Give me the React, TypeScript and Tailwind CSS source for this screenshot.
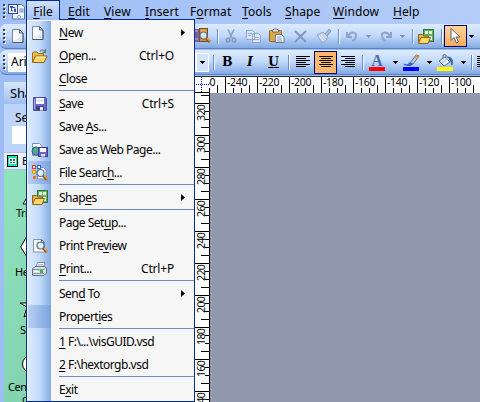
import React from "react";

type IconProps = { className?: string };

const PageIcon = ({ className = "" }: IconProps) => (
  <svg className={className} width="16" height="16" viewBox="2.5 0 16 16">
    <path d="M3 1.500h7l3.500 3.500v9.500H3z" fill="#f7faff" stroke="#7b8aa3" />
    <path d="M13.500 5v9.500H3" fill="none" stroke="#46546c" />
    <path d="M10 1.500V5h3.500z" fill="#c4d0e4" stroke="#55637c" />
    <path d="M12 7v6H6z" fill="#dde5f2" />
  </svg>
);

const OpenIcon = ({ className = "" }: IconProps) => (
  <svg className={className} width="17" height="16" viewBox="0 0 17 16">
    <path d="M9 3.500c1-2 3.500-2 5 0M14.500 1v3.500H11.500" fill="none" stroke="#5b7189" strokeWidth="1.200" />
    <path d="M1.500 14V5l1-1h3.500l1.500 1.500h5V8" fill="#e9bd57" stroke="#9a6d14" />
    <path d="M1.500 14.500L4.500 8h11.500l-3 6.500z" fill="#ffd66b" stroke="#8d6211" />
    <path d="M5 9h9.500" stroke="#fff0b5" />
  </svg>
);

const SaveIcon = ({ className = "" }: IconProps) => (
  <svg className={className} width="16" height="16" viewBox="0 0 16 16">
    <path d="M1.500 1.500h12l1 1v12h-13z" fill="#6968c4" stroke="#4f4ca6" />
    <rect x="4" y="2" width="8" height="6" fill="#f4f6ff" />
    <path d="M5 4.500h6" stroke="#c9cdea" />
    <rect x="4" y="10" width="8" height="4.500" fill="#454284" />
    <rect x="8" y="11" width="3" height="3.500" fill="#e8eaff" />
    <path d="M2.500 3v10" stroke="#aaa9ee" />
  </svg>
);

const SaveWebIcon = () => (
  <svg width="17" height="16" viewBox="0 0 17 16">
    <path d="M1.500 1.500h7L11 4v9.500H1.500z" fill="#f7faff" stroke="#8291a8" />
    <circle cx="5" cy="9" r="4" fill="#4b9bd2" stroke="#2d658f" />
    <path d="M2 8l3-2 2 2-2 2-1 2z" fill="#52b455" />
    <rect x="7.500" y="5.500" width="9" height="9" fill="#6867c3" stroke="#403d90" />
    <rect x="9" y="6" width="6" height="4" fill="#f6f7ff" />
    <rect x="10" y="12" width="4" height="2.500" fill="#d9dcf5" />
  </svg>
);

const Lens = ({ x = 0, y = 0 }: { x?: number; y?: number }) => (
  <g transform={`translate(${x} ${y})`}>
    <path d="M7 7l4 4" stroke="#8c541d" strokeWidth="3" />
    <path d="M8 7l3.500 3.500" stroke="#f3a44a" strokeWidth="1.500" />
    <circle cx="4.500" cy="4.500" r="3.500" fill="#d7efff" fillOpacity="0.900" stroke="#5f7487" strokeWidth="1.200" />
    <path d="M2.500 4.500c0-1 1-2 2-2" fill="none" stroke="#fff" />
  </g>
);

const SearchFileIcon = () => (
  <svg width="18" height="18" viewBox="0 0 18 18">
    <path d="M6.500 3.500h6l2.500 2.500v9H6.500z" fill="#f7faff" stroke="#8291a8" />
    <rect x="1.500" y="1.500" width="3" height="3" fill="#fff" stroke="#e13b25" />
    <rect x="6.500" y="1.500" width="3" height="3" fill="#fff" stroke="#2e62ce" />
    <rect x="1.500" y="6.500" width="3" height="3" fill="#ffd94d" stroke="#d99c16" />
    <rect x="2" y="12" width="3" height="3" fill="#e96d2e" />
    <Lens x={5} y={4.500} />
  </svg>
);

const ShapesIcon = ({ className = "" }: IconProps) => (
  <svg className={className} width="18" height="17" viewBox="0 0 18 17">
    <rect x="6.500" y="1.500" width="10" height="12" fill="#62b663" stroke="#2c743a" />
    <rect x="8" y="3" width="3" height="3" fill="#e2f8dc" />
    <rect x="12" y="3" width="3" height="3" fill="#e2f8dc" />
    <rect x="12" y="8" width="3" height="4" fill="#e2f8dc" />
    <path d="M1.500 14V6.500h4L7 8h4.500v2" fill="#e6b74e" stroke="#8b6418" />
    <path d="M1.500 15.500L4 9.500h9.500l-2.500 6z" fill="#ffd66b" stroke="#8b6418" />
  </svg>
);

const PreviewIcon = () => (
  <svg width="16" height="16" viewBox="0 0 16 16">
    <path d="M1.500 1.500h8L12.500 4.500v9.500h-11z" fill="#f7faff" stroke="#8493a9" />
    <path d="M9.500 1.500v3h3z" fill="#b9c7dc" stroke="#65758d" />
    <Lens x={4} y={3} />
  </svg>
);

const PrintIcon = () => (
  <svg width="17" height="16" viewBox="0 0 17 16">
    <path d="M5 6l1.500-4.500h7.500L12.500 7" fill="#fff" stroke="#7b8796" />
    <path d="M7 3.500h5M6.500 5h5" stroke="#b7c2d1" />
    <path d="M1.500 8L4 5.500h10l1.500 2V12L13 14.500H1.500z" fill="#d9dfe7" stroke="#68727f" />
    <path d="M2 8.500h11l2-2M2 12.500h11" fill="none" stroke="#8b96a4" />
    <rect x="9" y="9" width="3" height="3" fill="#17cd32" />
    <path d="M3 10.500h5" stroke="#fff" />
  </svg>
);

const VisioIcon = () => (
  <svg width="18" height="17" viewBox="0 0 18 17">
    <path d="M4.500 1.500h9L16.500 4v12h-12z" fill="#f2f6ff" stroke="#596f9e" />
    <rect x="12" y="6" width="3" height="3" fill="#c2d1ee" stroke="#8397c3" />
    <path d="M9 14l2-2 2 2-2 2z" fill="#e0e8fa" stroke="#8397c3" />
    <rect x="0.500" y="1.500" width="9" height="9" fill="#fff" stroke="#2546b4" />
    <rect x="2" y="3" width="3" height="2" fill="#3655bd" />
    <path d="M5 4.500h2v2M3.500 5v3h1.500" fill="none" stroke="#3655bd" />
    <rect x="6" y="6" width="2" height="3" fill="#3655bd" />
  </svg>
);

const ResearchIcon = () => (
  <svg width="18" height="18" viewBox="0 0 18 18">
    <rect x="0" y="2" width="5" height="13" fill="#76629d" />
    <path d="M1 4h3M1 12h3" stroke="#c7b7e4" />
    <rect x="5.500" y="1.500" width="8" height="13" fill="#d1933e" stroke="#76511f" />
    <path d="M7 4h5" stroke="#f4cf80" />
    <Lens x={5} y={4} />
  </svg>
);

const CutIcon = () => (
  <svg width="14" height="16" viewBox="0 0 14 16">
    <path d="M3 1.500l4.500 9M9 1.500l-4.500 9" stroke="#8ba0c4" strokeWidth="1.600" />
    <circle cx="3" cy="12" r="1.800" fill="none" stroke="#8298c1" strokeWidth="1.500" />
    <circle cx="9" cy="12" r="1.800" fill="none" stroke="#8298c1" strokeWidth="1.500" />
  </svg>
);

const CopyIcon = () => (
  <svg width="16" height="15" viewBox="0 0 16 15">
    <path d="M0.500 1.500h6l2 2v7h-8zM6.500 4.500h6l2 2v7h-8z" fill="#d9e5f8" stroke="#91a5c7" />
    <path d="M2 4.500h4M2 6.500h3M8 8.500h5M8 10.500h5" stroke="#9dafce" />
  </svg>
);

const PasteIcon = () => (
  <svg width="17" height="16" viewBox="0 0 17 16">
    <rect x="0.500" y="2.500" width="12" height="11" rx="1" fill="#e0a63f" stroke="#8a642b" />
    <path d="M3.500 4V2l2-1h2l2 1v2z" fill="#e8e6df" stroke="#796b54" />
    <path d="M6.500 6.500h6l2.500 2.500v5.500H6.500z" fill="#fff" stroke="#647695" />
    <path d="M8 9h4M8 11h5M8 13h5" stroke="#7791be" />
  </svg>
);

const PainterIcon = () => (
  <svg width="17" height="16" viewBox="0 0 17 16">
    <path d="M9 6l4-5 2 2-4 5" fill="#aabbd8" stroke="#829ac0" />
    <path d="M1 7l6-3 5 5-4 5-2 1z" fill="#c5d4ec" stroke="#90a5c8" />
    <path d="M3 8l5 5M5 7l5 5" stroke="#eef4ff" />
  </svg>
);

const UndoIcon = ({ redo = false }: { redo?: boolean }) => (
  <svg width="14" height="14" viewBox="0 0 14 14">
    <g transform={redo ? "matrix(-1 0 0 1 14 0)" : undefined}>
      <path d="M2 3v5h5M3 7C6 2 12 3 11 7c0 2-2 4-4 5" fill="none" stroke="#8ca4cc" strokeWidth="2" />
    </g>
  </svg>
);

const PointerIcon = () => (
  <svg width="13" height="18" viewBox="0 0 13 18">
    <path d="M2 1.500v12l3-3 2.500 5.500 2-1-2.500-5h4z" fill="#fff" stroke="#52627e" />
  </svg>
);

const FontIcon = () => (
  <svg width="16" height="17" viewBox="0 0 16 17">
    <text x="8" y="11.500" textAnchor="middle" fontFamily="Liberation Serif, serif" fontSize="16" fontWeight="700" letterSpacing="0" fill="#446ba8">A</text>
    <path d="M0 13h16v4H0z" fill="#f00" />
  </svg>
);

const BrushIcon = () => (
  <svg width="17" height="17" viewBox="0 0 17 17">
    <path d="M1 10.500c4 1 5 0 8-2" fill="none" stroke="#416fc0" strokeWidth="1.500" />
    <path d="M7 9l6-8 3 1-6 8z" fill="#bcd1eb" stroke="#506b98" />
    <path d="M13 1l3 1-2 3-3-1z" fill="#e89a39" />
    <path d="M5 10l2-2 3 2-2 2H4z" fill="#3766b8" />
    <path d="M0 13h16v4H0z" fill="#00f" />
  </svg>
);

const BucketIcon = () => (
  <svg width="17" height="17" viewBox="0 0 17 17">
    <path d="M6 5V2c0-2 3-2 3 0v5" fill="none" stroke="#526580" />
    <path d="M2 7l6-4 5 5-6 4z" fill="#eef4fd" stroke="#536a89" />
    <path d="M3.500 7.500L9 4l2 2-5 4z" fill="#cbd9ea" />
    <path d="M10 3c5 0 6 3 5 8-1-3-1-5-3-6" fill="#406ead" stroke="#355c9e" />
    <path d="M0 13h16v4H0z" fill="#ff0" />
  </svg>
);

const Lines = ({ kind }: { kind: "left" | "center" | "right" }) => {
  const widths = [14, 10, 14, 10, 14, 10];
  return (
    <svg width="14" height="12" viewBox="0 0 14 12" shapeRendering="crispEdges">
      {widths.map((w, i) => (
        <rect key={i} x={kind === "left" ? 0 : kind === "center" ? (14 - w) / 2 : 14 - w} y={i * 2} width={w} height="1" fill="#000" />
      ))}
    </svg>
  );
};

const Down = ({ muted = false }: { muted?: boolean }) => (
  <svg width="5" height="3" viewBox="0 0 5 3" shapeRendering="crispEdges">
    <path d="M0 0h5v1H0zM1 1h3v1H1zM2 2h1v1H2z" fill={muted ? "#8297bd" : "#000"} />
  </svg>
);

const Grip = () => (
  <div className="flex flex-col gap-[2px]">
    {[0, 1, 2, 3].map((i) => (
      <i key={i} className="block size-[2px] bg-[#274176] shadow-[1px_1px_0_#fff]" />
    ))}
  </div>
);

const Sep = () => <i className="block h-[15px] w-px shrink-0 bg-[#6a8ccb] shadow-[1px_0_0_#f1f9ff]" />;

/* Text whose access key is the letter that follows the ampersand. */
const Label = ({ text }: { text: string }) => {
  const at = text.indexOf("&");
  if (at < 0) return <>{text}</>;
  return (
    <>
      {text.slice(0, at)}
      <span className="underline decoration-1 underline-offset-2">{text[at + 1]}</span>
      {text.slice(at + 2)}
    </>
  );
};

type Item = { label: string; key?: string; icon?: React.ReactNode; sub?: boolean; shade?: boolean };

const groups: Item[][] = [
  [
    { label: "&New", icon: <PageIcon />, sub: true },
    { label: "&Open...", icon: <OpenIcon />, key: "Ctrl+O" },
    { label: "&Close" },
  ],
  [
    { label: "&Save", icon: <SaveIcon />, key: "Ctrl+S" },
    { label: "Save &As..." },
    { label: "Save as Web Pa&ge...", icon: <SaveWebIcon /> },
    { label: "File Searc&h...", icon: <SearchFileIcon />, shade: true },
  ],
  [{ label: "Shap&es", icon: <ShapesIcon />, sub: true }],
  [
    { label: "Page Set&up..." },
    { label: "Print Pre&view", icon: <PreviewIcon /> },
    { label: "&Print...", icon: <PrintIcon />, key: "Ctrl+P" },
  ],
  [{ label: "Sen&d To", sub: true }, { label: "Propert&ies", shade: true }],
  [{ label: "&1 F:\\...\\visGUID.vsd" }, { label: "&2 F:\\hextorgb.vsd" }],
  [{ label: "E&xit" }],
];

const FileMenu = () => (
  <div className="absolute left-[26px] top-0 flex h-[402px] w-[169px] flex-col">
    <div className="relative z-10 flex h-5 w-[34px] items-center justify-center border border-b-0 border-[#002d96] bg-gradient-to-b from-[#cfe0fd] to-[#a3c1f2] pt-[2px] text-[12px] tracking-[0.1px]">
      <span><Label text="&File" /></span>
    </div>
    <div className="-mt-px h-[383px] border border-[#002d96] bg-[#f6f6f6] p-px pr-0">
      {groups.map((items, g) => (
        <React.Fragment key={g}>
          {g > 0 && (
            <div className="flex h-[2px]">
              <i className="w-[23px] bg-gradient-to-r from-[#dceaff] via-[#c3dbfb] to-[#86abe3]" />
              <i className="ml-[8px] h-px flex-1 bg-[#6a8ccb]" />
            </div>
          )}
          {items.map((it) => (
            <div key={it.label} className="flex h-[23px] items-center">
              <div className={`flex h-full w-[23px] shrink-0 items-center justify-center ${it.shade ? "bg-gradient-to-r from-[#b8d0f5] to-[#7ba2df]" : "bg-gradient-to-r from-[#dceaff] via-[#c3dbfb] to-[#86abe3]"}`}>
                {it.icon}
              </div>
              <span className="ml-[8px] flex-1 whitespace-nowrap tracking-[-0.5px]">
                <Label text={it.label} />
              </span>
              {it.key && <span className="mr-[20px] tracking-[-0.2px]">{it.key}</span>}
              {it.sub && (
                <svg className="mr-[9px]" width="4" height="7" viewBox="0 0 4 7">
                  <path d="M0 0v7l4-3.500z" fill="#000" />
                </svg>
              )}
            </div>
          ))}
        </React.Fragment>
      ))}
    </div>
  </div>
);

const menus: [string, string][] = [
  ["&Edit", "w-[36px]"],
  ["&View", "w-[41px]"],
  ["&Insert", "w-[45px]"],
  ["F&ormat", "w-[52px]"],
  ["&Tools", "w-[43px]"],
  ["&Shape", "w-[48px]"],
  ["&Window", "w-[60px]"],
  ["&Help", "w-[40px]"],
];

const bar = "mb-px flex h-[25px] shrink-0 items-center rounded-l-md border-b border-[#5a83c5] bg-gradient-to-b from-[#deebfe] via-[#c0d8fa] to-[#83a9e3] [&>*]:shrink-0";

const HRuler = () => (
  <div className="relative h-4 w-[271px] overflow-hidden bg-white">
    <svg className="absolute inset-0" width="271" height="16" shapeRendering="crispEdges">
      {Array.from({ length: 35 }, (_, i) => {
        const h = i % 4 === 2 ? 16 : i % 4 === 1 ? 8 : 5;
        return <rect key={i} x={i * 8} y={16 - h} width="1" height={h} fill="#000" />;
      })}
    </svg>
    <div className="absolute left-[-16px] top-0 flex text-[10.5px] leading-[11px] tracking-[-0.3px]">
      {[260, 240, 220, 200, 180, 160, 140, 120, 100].map((n) => (
        <span key={n} className="w-8 shrink-0 pl-[2px]">-{n}</span>
      ))}
    </div>
  </div>
);

const VRuler = () => (
  <div className="relative h-[309px] w-[15px] shrink-0 overflow-hidden bg-white">
    <svg className="absolute inset-0" width="15" height="309" shapeRendering="crispEdges">
      {Array.from({ length: 39 }, (_, i) => {
        const w = i % 4 === 1 ? 15 : i % 4 === 0 ? 8 : 4;
        return <rect key={i} x={15 - w} y={2 + i * 8} width={w} height="1" fill="#000" />;
      })}
    </svg>
    <div className="flex flex-col pt-[12px] text-[10.5px] leading-[11px] tracking-[-0.6px]">
      {[320, 300, 280, 260, 240, 220, 200, 180, 160, 140].map((n) => (
        <span key={n} className="ml-[2px] h-8 w-[11px] shrink-0">
          <span className="block h-[18px] w-[11px] rotate-180 text-right [writing-mode:vertical-rl]">{n}</span>
        </span>
      ))}
    </div>
  </div>
);

const ShapesPane = () => (
  <div className="flex w-[190px] shrink-0 flex-col overflow-hidden pt-[6px]">
    <div className="flex h-[22px] shrink-0 items-center bg-gradient-to-b from-[#d7e6fc] to-[#a0bff0] pl-[6px] text-[13px]">Shapes</div>
    <div className="h-[48px] shrink-0 bg-[#bdd5fa] pt-[5px]">
      <div className="pl-[11px] text-[12px] leading-[17px]">Search</div>
      <div className="ml-2 h-[18px] bg-white" />
    </div>
    <div className="flex h-[18px] shrink-0 items-center gap-1 border-y border-[#a9c3ec] bg-gradient-to-b from-[#eef5ff] to-[#dbe8fc] pl-[3px] text-[11px]">
      <svg className="shrink-0" width="11" height="12" viewBox="0 0 11 12" shapeRendering="crispEdges">
        <rect width="11" height="12" fill="#000" />
        <rect x="1" y="1" width="9" height="10" fill="#16eaa7" />
        <path d="M2 3h7v6H2z" fill="#fff" />
        <path d="M3 4h2v2H3zM6 4h2v2H6zM3 7h2v1H3zM6 7h2v1H6z" fill="#0a8a5c" />
      </svg>
      <span>Basic</span>
    </div>
    <div className="flex flex-1 flex-col overflow-hidden bg-gradient-to-br from-[#91e3be] to-[#75c8a4] text-[11px] leading-[12px] tracking-[-0.5px]">
      <div className="h-[60px] shrink-0 pl-[12px] pt-[23px]">
        <svg className="ml-[6px]" width="20" height="14"><path d="M1 11L7 1l7 10z" fill="#fff" stroke="#000" /></svg>
        <div>Triangle</div>
      </div>
      <div className="h-[58px] shrink-0 pl-[11px] pt-[5px]">
        <svg className="ml-[5px]" width="24" height="24"><path d="M.7 12L7 1h10l6 11-6 10H7z" fill="#fff" stroke="#000" /></svg>
        <div className="pt-[7px]">Hexagon</div>
      </div>
      <div className="h-[56px] shrink-0 pl-[16px] pt-[12px]">
        <svg width="24" height="20"><path d="M0 3h9l3-7 3 7h9l-7 5 3 9-8-5-8 5 3-10z" fill="#fff" stroke="#000" /></svg>
        <div className="pt-[4px]">Star</div>
      </div>
      <div className="shrink-0 pl-[4px] pt-[11px]">
        <svg className="ml-[14px]" width="20" height="20"><circle cx="9" cy="9" r="8.500" fill="#fff" stroke="#000" /></svg>
        <div className="pt-[6px]">Center</div>
        <div className="pl-[14px]">circle</div>
      </div>
    </div>
  </div>
);

const serif = "font-['DejaVu_Serif',serif] text-[12.5px] font-bold tracking-normal";

export default function App() {
  return (
    <div className="relative flex h-[402px] w-[480px] flex-col overflow-hidden bg-[#9ebdf5] font-['Noto_Sans',sans-serif] text-[12px] leading-4 tracking-[-0.2px] text-black">
      <div className="flex h-[24px] shrink-0 items-center bg-gradient-to-r from-[#9ebef5] to-[#b4cdf8] pb-[2px]">
        <div className="flex w-[62px] items-center gap-[3px] pl-[3px]">
          <Grip />
          <VisioIcon />
        </div>
        {menus.map(([m, w]) => (
          <div key={m} className={`${w} shrink-0 pl-[6px] pt-px tracking-[0.1px]`}>
            <Label text={m} />
          </div>
        ))}
      </div>

      <div className={bar}>
        <div className="flex w-[194px] items-center gap-[7px] pl-[3px]">
          <Grip />
          <PageIcon />
        </div>
        <div className="w-[23px]"><ResearchIcon /></div>
        <Sep />
        <div className="ml-[7px] w-[21px]"><CutIcon /></div>
        <div className="w-[23px]"><CopyIcon /></div>
        <div className="w-[25px]"><PasteIcon /></div>
        <div className="w-[22px]">
          <svg width="13" height="13" viewBox="0 0 13 13"><path d="M1 1l11 11M12 1L1 12" stroke="#8197bf" strokeWidth="2" /></svg>
        </div>
        <div className="w-[22px]"><PainterIcon /></div>
        <Sep />
        <div className="ml-[6px] w-[21px]"><UndoIcon /></div>
        <div className="w-[13px]"><Down muted /></div>
        <div className="w-[21px]"><UndoIcon redo /></div>
        <div className="w-[12px]"><Down muted /></div>
        <Sep />
        <div className="ml-[4px] w-[24px]"><ShapesIcon /></div>
        <Sep />
        <div className="ml-[2px] flex h-[22px] w-[23px] items-center justify-center border border-[#000080] bg-gradient-to-b from-[#ffd49c] to-[#ffab55]"><PointerIcon /></div>
        <div className="ml-[2px]"><Down /></div>
      </div>

      <div className={bar}>
        <div className="flex w-[210px] items-center gap-[3px] pl-[3px]">
          <Grip />
          <div className="flex h-[19px] flex-1 items-center border border-white bg-white pl-[2px] text-[12px] tracking-normal">Arial</div>
          <div className="-ml-[3px] mr-[1px] flex h-[19px] w-[13px] items-center justify-center border border-white bg-[#d3e3fb]"><Down /></div>
        </div>
        <div className="ml-[3px]"><Sep /></div>
        <div className={`ml-[8px] w-[25px] ${serif}`}>B</div>
        <div className={`w-[21px] italic ${serif}`}>I</div>
        <div className={`w-[20px] underline ${serif}`}>U</div>
        <Sep />
        <div className="ml-[7px] w-[18px]"><Lines kind="left" /></div>
        <div className="flex h-[23px] w-[23px] items-center justify-center border border-[#000080] bg-[#ffb768]"><Lines kind="center" /></div>
        <div className="ml-[4px] w-[21px]"><Lines kind="right" /></div>
        <Sep />
        <div className="ml-[6px] w-[24px]"><FontIcon /></div>
        <div className="w-[10px]"><Down /></div>
        <div className="w-[24px]"><BrushIcon /></div>
        <div className="w-[10px]"><Down /></div>
        <div className="w-[24px]"><BucketIcon /></div>
        <div className="w-[10px]"><Down /></div>
        <Sep />
        <div className="ml-[5px]"><Lines kind="left" /></div>
      </div>

      <div className="flex h-[326px] shrink-0 pl-1">
        <ShapesPane />
        <div className="flex flex-1 flex-col overflow-hidden border-t border-[#2b2f3a]">
          <div className="flex h-4 shrink-0 border-b border-black">
            <div className="relative w-[15px] shrink-0 bg-white">
              <i className="absolute left-0 top-[7px] w-full border-t border-dotted border-[#0000e0]" />
              <i className="absolute left-[7px] top-0 h-full border-l border-dotted border-[#0000e0]" />
            </div>
            <HRuler />
          </div>
          <div className="flex flex-1">
            <VRuler />
            <div className="flex-1 border-l border-black bg-[#9199ae]" />
          </div>
        </div>
      </div>

      <FileMenu />
    </div>
  );
}
